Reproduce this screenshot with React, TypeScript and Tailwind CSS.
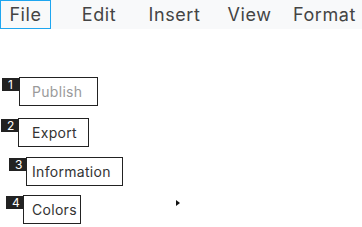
const font = { fontFamily: 'Inter, "Noto Sans", sans-serif' };

function Badge({ n }: { n: string }) {
  return (
    <span className="absolute left-[-18px] top-0 w-[18px] h-[13px] bg-[#222] text-white text-[12px] leading-none pl-[6px] pt-[1px]">
      {n}
    </span>
  );
}

export default function App() {
  return (
    <div className="w-[362px] h-[227px] bg-white overflow-hidden" style={font}>
      <div className="flex h-[29px] bg-[#f8f9fa] text-[18px] tracking-[0.6px] text-[#444]">
        <div className="w-[51px] h-[29px] border border-[#1ea6f0] flex items-center justify-center">File</div>
        <div className="ml-[10px] w-[76px] flex items-center justify-center">Edit</div>
        <div className="w-[75px] flex items-center justify-center">Insert</div>
        <div className="w-[75px] flex items-center justify-center">View</div>
        <div className="w-[75px] flex items-center justify-center">Format</div>
      </div>

      <div className="flex flex-col text-[14px] tracking-[0.3px] text-[#333]">
        <div className="mt-[48px] ml-[19px] relative w-[79px] h-[29px] border border-[#222] flex items-center pl-[12px] text-[#9a9a9a]">
          <Badge n="1" />
          Publish
        </div>
        <div className="mt-[12px] ml-[18px] relative w-[71px] h-[29px] border border-[#222] flex items-center pl-[13px]">
          <Badge n="2" />
          Export
        </div>
        <div className="mt-[10px] ml-[26px] relative w-[97px] h-[29px] border border-[#222] flex items-center pl-[5px]">
          <Badge n="3" />
          Information
        </div>
        <div className="mt-[9px] flex items-center w-[180px]">
          <div className="ml-[23px] relative w-[58px] h-[29px] border border-[#222] flex items-center pl-[8px]">
            <Badge n="4" />
            Colors
          </div>
          <svg className="ml-auto self-start mt-[5px]" width="4" height="6" viewBox="0 0 4 6">
            <path d="M0 0 L4 3 L0 6 Z" fill="#111" />
          </svg>
        </div>
      </div>
    </div>
  );
}
